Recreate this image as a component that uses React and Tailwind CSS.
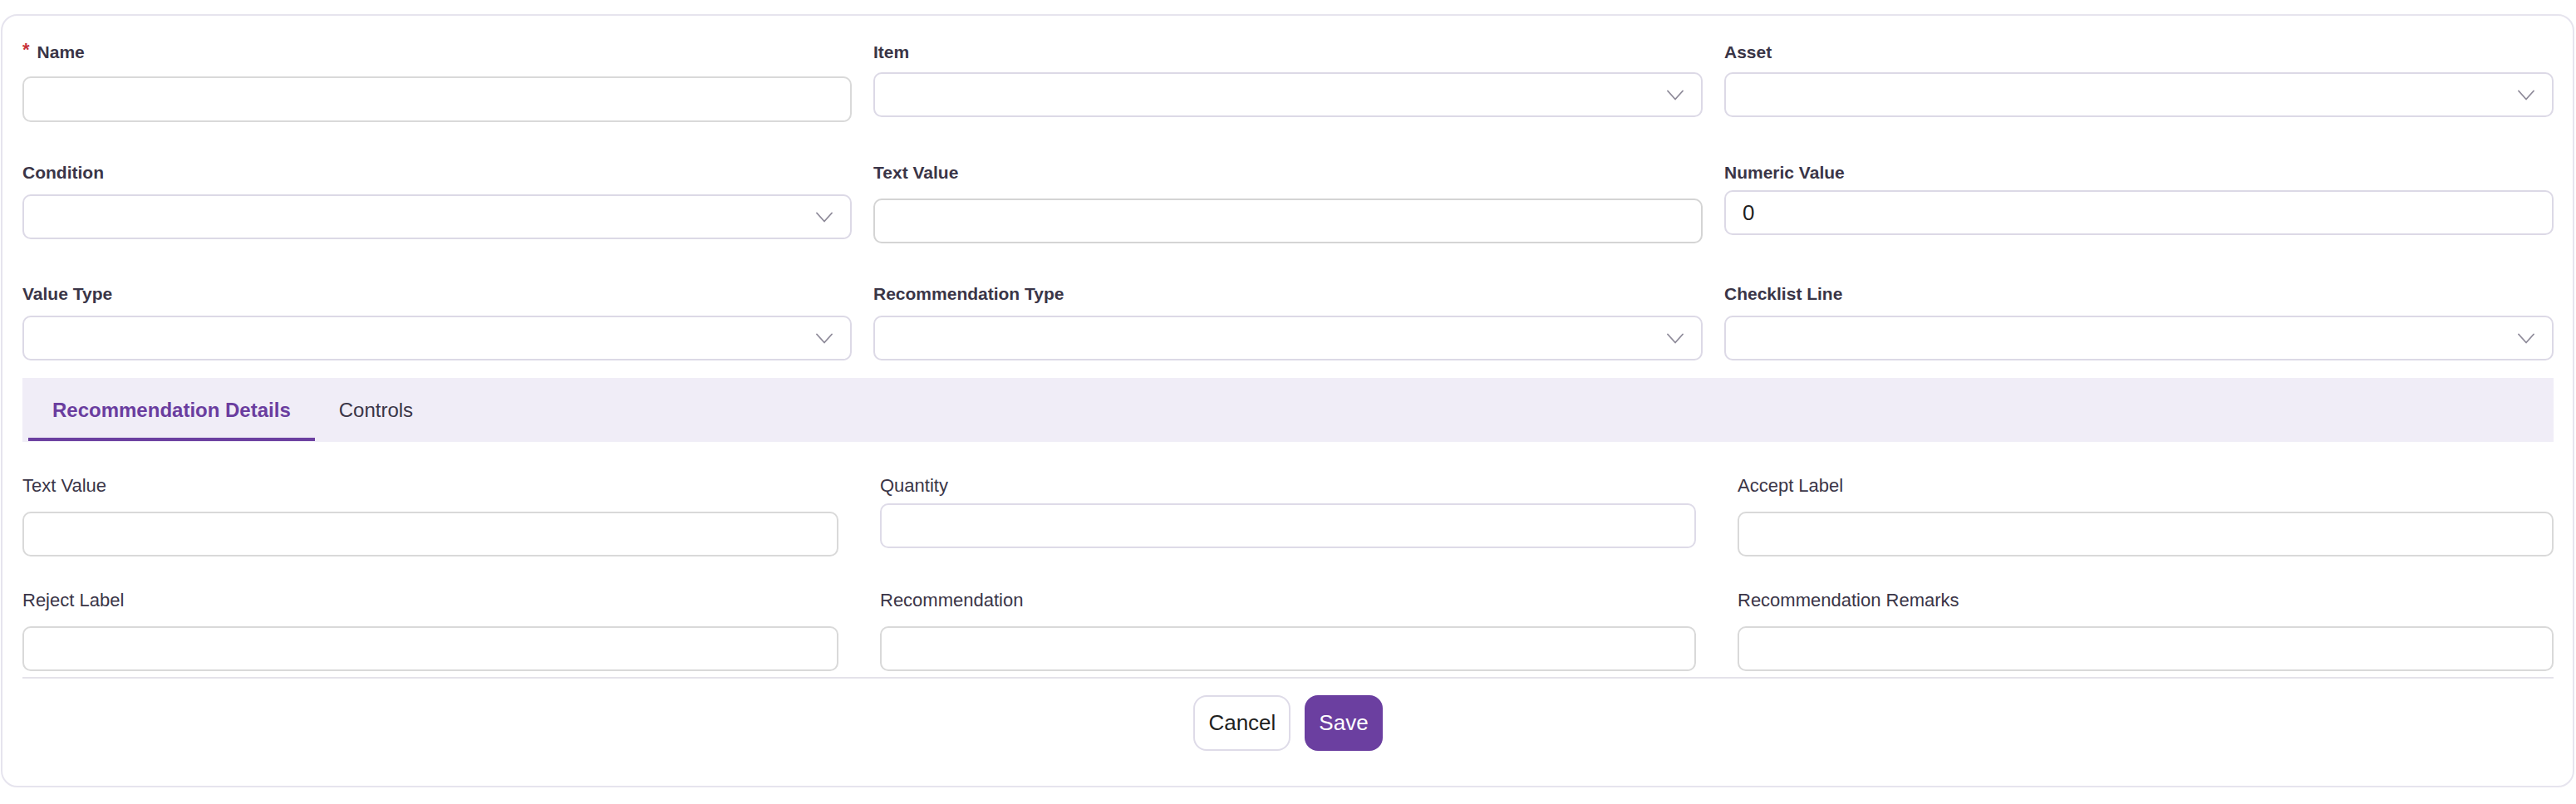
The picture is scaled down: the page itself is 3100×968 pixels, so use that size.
import React from 'react'

// Checklist recommendation form — two-section layout: header fields, then tabs.
const labelTone = 'text-[#3a3547]'

function Chevron() {
  return (
    <svg width="20" height="13" viewBox="0 0 20 13" fill="none">
      <path d="M1 1.5L10 11.5L19 1.5" stroke="#8e8a99" strokeWidth="1.8" strokeLinecap="round" strokeLinejoin="round" />
    </svg>
  )
}

function TopLabel({ children, required }) {
  return (
    <label className={`flex items-center text-[21px] leading-[32px] font-bold ${labelTone}`}>
      {required && <span className="mr-[9px] text-[22px] leading-none text-[#c8313a] -mt-[6px]">*</span>}
      {children}
    </label>
  )
}

function SelectBox({ className = '' }) {
  return (
    <div className={`h-[54px] rounded-[10px] border-2 border-[#dcd9e6] bg-white flex items-center justify-end pr-[21px] ${className}`}>
      <Chevron />
    </div>
  )
}

function TextBox({ className = '', value, tone = 'border-[#d9d9d9]' }) {
  return (
    <input
      readOnly
      value={value ?? ''}
      className={`block w-full h-[54px] rounded-[10px] border-2 ${tone} bg-white px-[18px] text-[26px] text-[#1f1f1f] outline-none ${className}`}
    />
  )
}

function DetailField({ label, mt = 'mt-[15px]', tone }) {
  return (
    <div className="flex flex-col">
      <label className={`text-[22px] leading-[32px] ${labelTone}`}>{label}</label>
      <TextBox className={mt} tone={tone} />
    </div>
  )
}

export default function App() {
  return (
    <div className="min-h-screen bg-white font-['Liberation_Sans',Arial,sans-serif] pt-[17px] pl-[1px] pr-[2px]">
      <div className="rounded-[20px] border-2 border-[#e6e4ee] bg-white pl-[24px] pr-[23px] pt-[28px] pb-[42px]">
        {/* header fields */}
        <div className="grid grid-cols-3 gap-x-[26px] gap-y-[45px] items-start">
          <div className="flex flex-col">
            <TopLabel required>Name</TopLabel>
            <TextBox className="mt-[13px] h-[55px]" />
          </div>
          <div className="flex flex-col">
            <TopLabel>Item</TopLabel>
            <SelectBox className="mt-[8px]" />
          </div>
          <div className="flex flex-col">
            <TopLabel>Asset</TopLabel>
            <SelectBox className="mt-[8px]" />
          </div>

          <div className="flex flex-col">
            <TopLabel>Condition</TopLabel>
            <SelectBox className="mt-[10px]" />
          </div>
          <div className="flex flex-col">
            <TopLabel>Text Value</TopLabel>
            <TextBox className="mt-[15px]" tone="border-[#d4d4d4]" />
          </div>
          <div className="flex flex-col">
            <TopLabel>Numeric Value</TopLabel>
            <TextBox className="mt-[5px] px-[20px]" value="0" tone="border-[#dcd9e6]" />
          </div>

          <div className="flex flex-col">
            <TopLabel>Value Type</TopLabel>
            <SelectBox className="mt-[10px]" />
          </div>
          <div className="flex flex-col">
            <TopLabel>Recommendation Type</TopLabel>
            <SelectBox className="mt-[10px]" />
          </div>
          <div className="flex flex-col">
            <TopLabel>Checklist Line</TopLabel>
            <SelectBox className="mt-[10px]" />
          </div>
        </div>

        {/* tabs */}
        <div className="mt-[21px] h-[77px] bg-[#f0edf7] flex items-stretch pl-[7px]">
          <div className="relative flex items-center px-[29px] text-[24px] font-bold text-[#6a3d9f]">
            Recommendation Details
            <span className="absolute left-0 right-0 bottom-[1px] h-[4px] bg-[#6b3fa0]" />
          </div>
          <div className={`flex items-center px-[29px] text-[24px] ${labelTone}`}>Controls</div>
        </div>

        {/* recommendation details */}
        <div className="mt-[37px] grid grid-cols-3 gap-x-[50px] gap-y-[37px] items-start">
          <DetailField label="Text Value" />
          <DetailField label="Quantity" mt="mt-[5px]" tone="border-[#dedbe8]" />
          <DetailField label="Accept Label" />
          <DetailField label="Reject Label" />
          <DetailField label="Recommendation" />
          <DetailField label="Recommendation Remarks" />
        </div>

        <div className="mt-[7px] h-[2px] bg-[#e4e2ea]" />

        <div className="mt-[20px] flex justify-center gap-[17px]">
          <button className="h-[67px] rounded-[16px] border-2 border-[#dedbe8] bg-white px-[16px] text-[26px] text-[#1f1f1f]">
            Cancel
          </button>
          <button className="h-[67px] rounded-[16px] bg-[#6b3fa0] px-[17px] text-[26px] text-white">
            Save
          </button>
        </div>
      </div>
    </div>
  )
}
